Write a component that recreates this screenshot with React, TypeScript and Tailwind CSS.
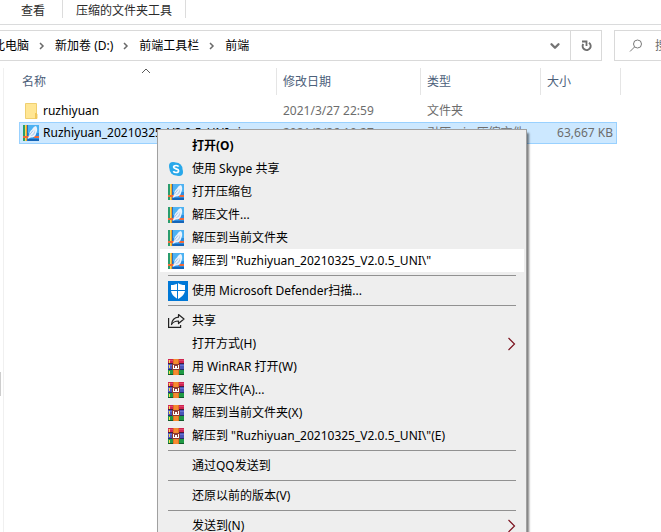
import React from 'react';
import { ChevronDown } from 'lucide-react';

type MenuEntry =
  | { kind: 'item'; label: string; icon?: React.ReactNode; bold?: boolean; active?: boolean; submenu?: boolean }
  | { kind: 'separator' };

function ZipIcon() {
  return (
    <svg width="16" height="16" viewBox="0 0 16 16" className="block shrink-0">
      <rect width="16" height="16" fill="#2b8de0" />
      <rect x="5" width="11" height="8" fill="#4db2f2" />
      <rect y="14" width="16" height="2" fill="#1565b8" />
      <rect width="2" height="16" fill="#2a9d6e" />
      <rect x="2" width="1" height="16" fill="#f3dc58" />
      <rect x="3" width="1" height="16" fill="#f0a030" />
      <rect x="4" width="1" height="16" fill="#2870b8" />
      <path d="M0 11h6v2H0zM11 11h5v2h-5z" fill="#f0693a" />
      <path d="M13 1c-2 .5-3 1.500-4 3.500-2 1.500-3 3.500-3 6L4.500 14l3.500-1.500c3.500 0 5-2 5.500-5 1-2 1-4.500-.5-6.500z" fill="#eaf3fc" />
      <path d="M12 4.500c-.5 3-2 5-4.500 6.500 3 0 5.500-2.500 4.500-6.500z" fill="#b4cdea" />
      <path d="M6 10.500l4-5" stroke="#8db4de" strokeWidth=".8" />
    </svg>
  );
}

function SkypeIcon() {
  return (
    <svg width="16" height="16" viewBox="0 0 16 16" className="block shrink-0">
      <circle cx="8" cy="8" r="6.500" fill="#28a8ea" />
      <circle cx="5" cy="5" r="4" fill="#28a8ea" />
      <circle cx="11" cy="11" r="4" fill="#28a8ea" />
      <path
        d="M10.600 5.700C10.200 4.800 9.200 4.500 8 4.500c-1.400 0-2.400.6-2.400 1.600C5.600 8.500 10.600 7.300 10.600 9.800c0 1.100-1.100 1.700-2.500 1.700-1.300 0-2.300-.4-2.700-1.400"
        fill="none"
        stroke="#fff"
        strokeWidth="1.700"
      />
    </svg>
  );
}

function DefenderIcon() {
  return (
    <svg width="20" height="20" viewBox="0 0 20 20" className="block shrink-0">
      <rect width="20" height="20" fill="#0078d7" />
      <path d="M10 2c2 1.500 4 2 7 2v5c0 4-3 7-7 9-4-2-7-5-7-9V4c3 0 5-.5 7-2z" fill="#fff" />
      <path d="M9.500 2v16M3 9.500h14" stroke="#0078d7" strokeWidth="1" />
    </svg>
  );
}

function ShareIcon() {
  return (
    <svg width="17" height="16" viewBox="0 0 17 16" className="block shrink-0" fill="none" stroke="#222" strokeWidth="1.200">
      <path d="M.6 5v9.400h12V12" />
      <path d="M10.500 1.500l5.500 4.500-5.500 4.500V8C7.500 8 5 9 3.500 11.500 4 7 6.500 4.500 10.500 4.200z" strokeLinejoin="round" />
    </svg>
  );
}

function WinRarIcon() {
  return (
    <svg width="16" height="16" viewBox="0 0 16 16" className="block shrink-0" shapeRendering="crispEdges">
      <rect width="16" height="16" fill="#4a1838" />
      <rect width="16" height="4" fill="#cf2450" />
      <rect y="1" width="16" height="1" fill="#e0446c" />
      <rect y="5" width="16" height="5" fill="#4a55b8" />
      <rect y="6" width="16" height="1" fill="#6673d0" />
      <rect y="10" width="16" height="1" fill="#242c68" />
      <rect y="11" width="16" height="4" fill="#1f9a44" />
      <rect y="15" width="16" height="1" fill="#0f5a28" />
      <rect x="1" y="1" width="1" height="3" fill="#f4dc50" />
      <rect x="1" y="6" width="1" height="3" fill="#f4dc50" />
      <rect x="1" y="12" width="1" height="3" fill="#f4dc50" />
      <rect x="5" width="6" height="16" fill="#e07020" />
      <rect x="6" width="4" height="16" fill="#f58a30" />
      <rect x="4" y="5" width="8" height="6" fill="#8c3a34" />
      <path d="M5 6h1v3h4V6h1v4H5zM7 7h2v2H7z" fill="#fff" />
    </svg>
  );
}

function FolderIcon() {
  return (
    <svg width="16" height="16" viewBox="0 0 16 16" className="block shrink-0">
      <path d="M2.500.5h11v10l.5.5v4.500H2.500z" fill="#ffe694" stroke="#efcf70" />
      <path d="M12 10h2v6h-2z" fill="#f0c75a" />
    </svg>
  );
}

function RefreshIcon() {
  return (
    <svg width="11" height="12" viewBox="0 0 11 12" fill="none" stroke="#6f6f6f" strokeWidth="2">
      <path d="M8 2.800A4 4 0 1 1 2.200 4" />
      <path d="M1 1.500h4.500V6" strokeWidth="1.800" />
    </svg>
  );
}

const menu: MenuEntry[] = [
  { kind: 'item', label: '打开(O)', bold: true },
  { kind: 'item', label: '使用 Skype 共享', icon: <SkypeIcon /> },
  { kind: 'item', label: '打开压缩包', icon: <ZipIcon /> },
  { kind: 'item', label: '解压文件...', icon: <ZipIcon /> },
  { kind: 'item', label: '解压到当前文件夹', icon: <ZipIcon /> },
  { kind: 'item', label: '解压到 "Ruzhiyuan_20210325_V2.0.5_UNI\\"', icon: <ZipIcon />, active: true },
  { kind: 'separator' },
  { kind: 'item', label: '使用 Microsoft Defender扫描...', icon: <DefenderIcon /> },
  { kind: 'separator' },
  { kind: 'item', label: '共享', icon: <ShareIcon /> },
  { kind: 'item', label: '打开方式(H)', submenu: true },
  { kind: 'item', label: '用 WinRAR 打开(W)', icon: <WinRarIcon /> },
  { kind: 'item', label: '解压文件(A)...', icon: <WinRarIcon /> },
  { kind: 'item', label: '解压到当前文件夹(X)', icon: <WinRarIcon /> },
  { kind: 'item', label: '解压到 "Ruzhiyuan_20210325_V2.0.5_UNI\\"(E)', icon: <WinRarIcon /> },
  { kind: 'separator' },
  { kind: 'item', label: '通过QQ发送到' },
  { kind: 'separator' },
  { kind: 'item', label: '还原以前的版本(V)' },
  { kind: 'separator' },
  { kind: 'item', label: '发送到(N)', submenu: true },
];

const files = [
  { name: 'ruzhiyuan', date: '2021/3/27 22:59', type: '文件夹', size: '', icon: <FolderIcon />, selected: false },
  {
    name: 'Ruzhiyuan_20210325_V2.0.5_UNI.zip',
    date: '2021/3/26 10:27',
    type: '引压 .zip 压缩文件',
    size: '63,667 KB',
    icon: <ZipIcon />,
    selected: true,
  },
];

const crumbs = ['此电脑', '新加卷 (D:)', '前端工具栏', '前端'];

function Ribbon() {
  return (
    <div className="flex h-[25px] items-start border-b border-[#dadbdc] text-[#2b2b2b]">
      <button className="h-[21px] pl-[21px] pr-[17px] leading-[21px]">查看</button>
      <div className="h-[18px] w-px bg-[#dcdcdc]" />
      <button className="h-[21px] px-[13px] leading-[21px]">压缩的文件夹工具</button>
      <div className="h-[18px] w-px bg-[#dcdcdc]" />
    </div>
  );
}

function AddressBar() {
  return (
    <div className="mt-[5px] flex h-[31px]">
      <div className="flex min-w-0 flex-1 border border-l-0 border-[#d9d9d9]">
        <nav className="-ml-[7px] flex min-w-0 flex-1 items-center">
          {crumbs.map((crumb, i) => (
            <React.Fragment key={crumb}>
              {i > 0 && (
                <svg width="26" height="8" viewBox="0 0 26 8" fill="none" stroke="#6a6a6a" strokeWidth="1.500">
                  <path d="M11 1l3 3-3 3" />
                </svg>
              )}
              <a href="#" className="whitespace-nowrap text-black">{crumb}</a>
            </React.Fragment>
          ))}
        </nav>
        <button aria-label="展开" className="flex w-[30px] items-center justify-center">
          <ChevronDown size={14} strokeWidth={4} color="#747474" />
        </button>
        <button aria-label="刷新" className="flex w-[31px] items-center justify-center border-l border-[#d9d9d9]">
          <RefreshIcon />
        </button>
      </div>
      <label className="ml-3 flex w-[47px] items-center gap-3 overflow-hidden border border-r-0 border-[#d9d9d9] pl-[14px]">
        <svg width="14" height="14" viewBox="0 0 14 14" fill="none" stroke="#7a7a7a" className="shrink-0">
          <circle cx="8.500" cy="5" r="4" />
          <path d="M5.500 8L1 12.500" />
        </svg>
        <input
          aria-label="搜索"
          placeholder="搜索"
          className="w-16 shrink-0 bg-transparent outline-none placeholder:text-[#6d6d6d]"
        />
      </label>
    </div>
  );
}

function FileTable() {
  return (
    <table className="w-[602px] table-fixed border-separate border-spacing-0">
      <colgroup>
        <col className="w-[258px]" />
        <col className="w-[144px]" />
        <col className="w-[120px]" />
        <col />
      </colgroup>
      <thead>
        <tr className="h-[27px] text-left text-[#4c607a]">
          {['名称', '修改日期', '类型', '大小'].map((title, i) => (
            <th key={title} className={`relative border-r border-[#e5e5e5] p-0 font-normal ${i === 0 ? 'pl-[3px]' : 'pl-[6px]'}`}>
              {title}
              {i === 0 && (
                <svg width="10" height="6" viewBox="0 0 10 6" fill="none" stroke="#5a5a5a" className="absolute left-[122px] top-0">
                  <path d="M1 5l4-4 4 4" />
                </svg>
              )}
            </th>
          ))}
        </tr>
      </thead>
      <tbody>
        <tr className="h-[5px]" />
        {files.map((file) => {
          const cell = `p-0 border-y ${file.selected ? 'border-[#99d1ff] bg-[#cce8ff]' : 'border-transparent'}`;
          return (
            <tr key={file.name} className="h-[22px] whitespace-nowrap text-[#6d6d6d]">
              <td className={`${cell} border-l pl-[3px] text-black`}>
                <div className="flex items-center gap-1">
                  {file.icon}
                  {file.name}
                </div>
              </td>
              <td className={`${cell} pl-[6px]`}>{file.date}</td>
              <td className={`${cell} pl-[6px]`}>{file.type}</td>
              <td className="p-0">
                <div className={`mr-1 h-[22px] border-y border-r pr-[3px] text-right leading-[20px] ${file.selected ? 'border-[#99d1ff] bg-[#cce8ff]' : 'border-transparent'}`}>
                  {file.size}
                </div>
              </td>
            </tr>
          );
        })}
      </tbody>
    </table>
  );
}

function ContextMenu() {
  return (
    <div
      role="menu"
      className="absolute left-[157px] top-[129px] w-[370px] border border-[#a0a0a0] bg-[#eeeeee] px-[2px] py-1 text-black shadow-[2px_4px_2px_0_rgba(0,0,0,0.5)]"
    >
      {menu.map((entry, i) =>
        entry.kind === 'separator' ? (
          <div key={i} role="separator" className="mx-2 my-[3px] h-px bg-[#919191]" />
        ) : (
          <button
            key={i}
            role="menuitem"
            className={`flex h-[23px] w-full items-center px-2 text-left ${entry.active ? 'bg-white' : ''} ${entry.bold ? 'font-bold' : ''}`}
          >
            <span className="w-6 shrink-0">{entry.icon}</span>
            <span className="flex-1 whitespace-nowrap">{entry.label}</span>
            {entry.submenu && (
              <svg width="8" height="14" viewBox="0 0 8 14" fill="none" stroke="#7c1420" strokeWidth="1.200">
                <path d="M.5 1l6 6-6 6" />
              </svg>
            )}
          </button>
        )
      )}
    </div>
  );
}

export default function App() {
  return (
    <div className="relative flex h-screen flex-col overflow-hidden bg-white font-['Noto_Sans','Noto_Sans_CJK_SC',sans-serif] text-[12px] leading-[18px]">
      <Ribbon />
      <AddressBar />
      <main className="mt-[7px] flex flex-1">
        <div className="flex w-1 items-center border-r border-[#f0f0f0]">
          <div className="mt-[168px] h-6 w-px bg-[#cdcdcd]" />
        </div>
        <div className="pl-[15px]">
          <FileTable />
        </div>
      </main>
      <ContextMenu />
    </div>
  );
}
